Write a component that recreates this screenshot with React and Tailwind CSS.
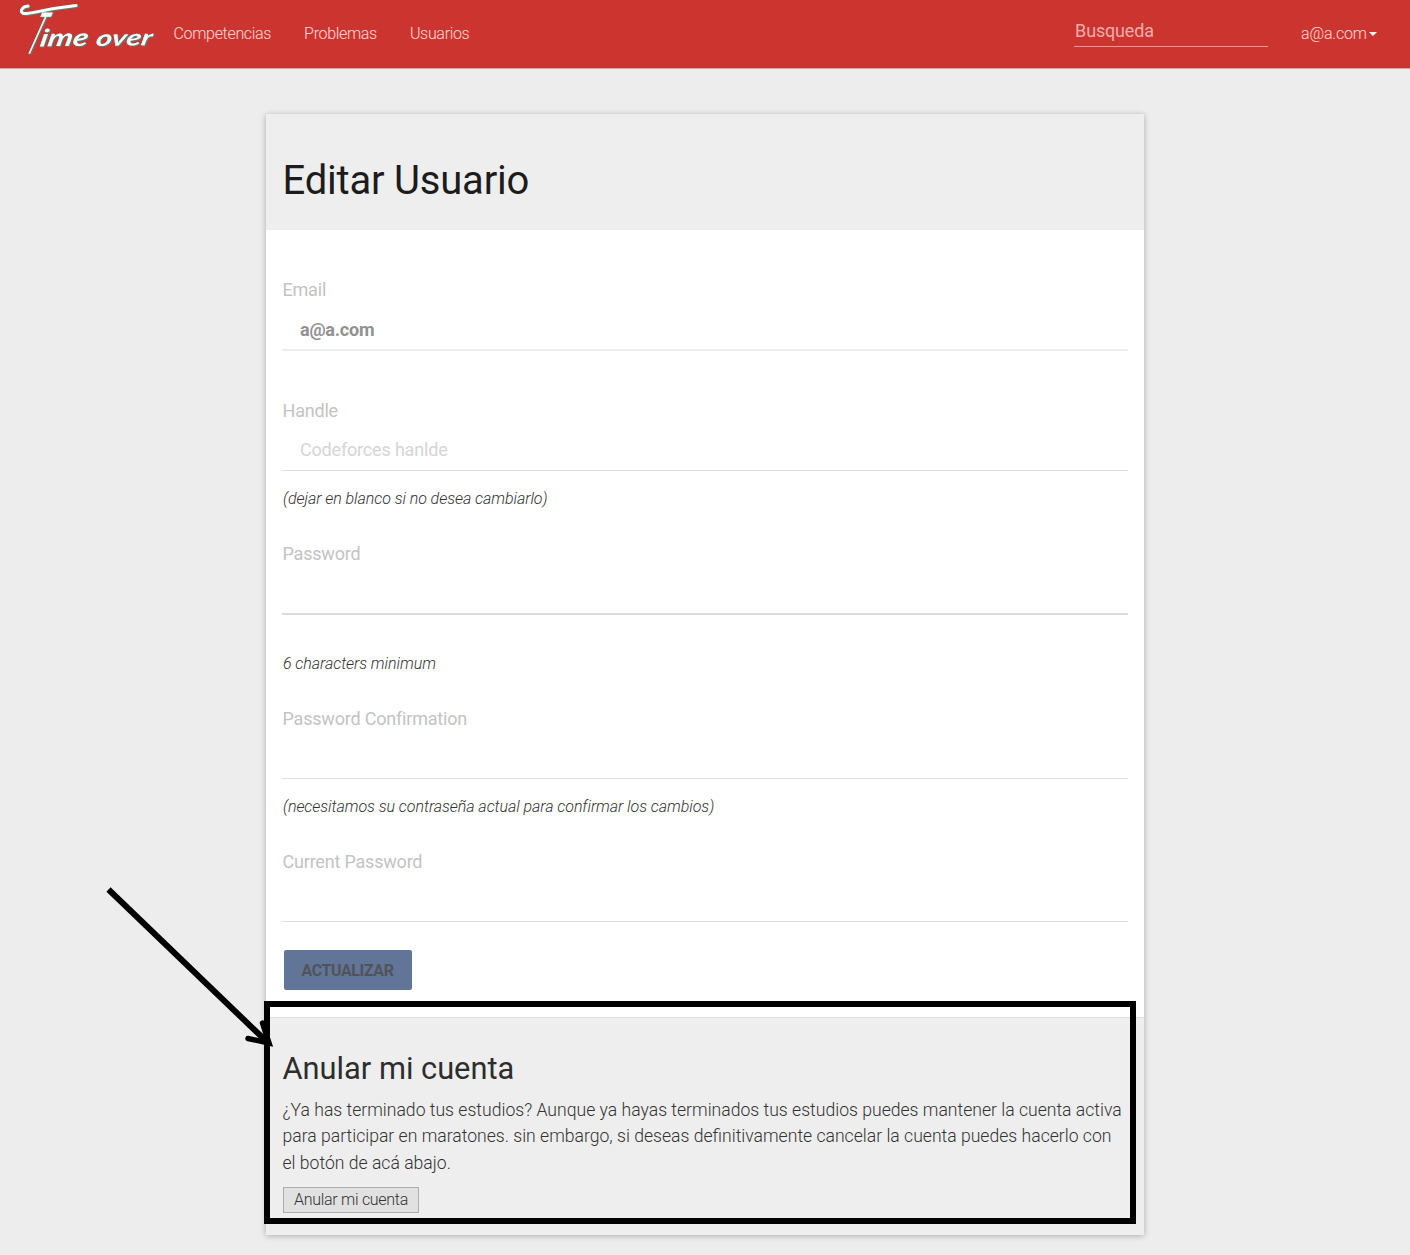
import React from "react";

function Logo() {
  return (
    <svg
      className="ml-4 h-[60px] w-[144px] shrink-0 overflow-visible"
      viewBox="0 0 144 60"
      aria-label="Time over"
    >
      <g className="[filter:drop-shadow(1px_1px_0_#3f8a7c)]">
        <path
          d="M12 6C6 6.500 3 12 7.500 13.500C14 14.500 24 9.500 60 5.500"
          fill="none"
          stroke="#fff"
          strokeWidth="3"
          strokeLinecap="round"
        />
        <text
          transform="translate(8 52.500) skewX(-24)"
          fill="#fff"
          stroke="#fff"
          strokeWidth="1.5"
          className="font-['Roboto'] text-[56px] font-light"
          textLength="11"
          lengthAdjust="spacingAndGlyphs"
        >
          T
        </text>
        <text
          transform="translate(23 46.500) rotate(-1) skewX(-12)"
          fill="#fff"
          className="font-['Lato'] text-[24px] font-bold italic"
          textLength="48"
          lengthAdjust="spacingAndGlyphs"
        >
          ime
        </text>
        <text
          transform="translate(79 46) rotate(-1) skewX(-12)"
          fill="#fff"
          className="font-['Lato'] text-[22px] font-bold italic"
          textLength="56"
          lengthAdjust="spacingAndGlyphs"
        >
          over
        </text>
      </g>
    </svg>
  );
}

function Label({ children, className }) {
  return (
    <label className={`block h-5 pl-[0.5px] text-[18px] leading-5 tracking-[-0.2px] text-[#c3c3c3] ${className}`}>
      {children}
    </label>
  );
}

function Hint({ children, className }) {
  return (
    <p className={`h-5 pl-px text-[16px] font-light leading-5 tracking-[-0.05px] italic text-[#333] ${className}`}>
      {children}
    </p>
  );
}

export default function App() {
  return (
    <div className="relative h-[1255px] w-[1410px] overflow-hidden bg-[#ededed] font-['Roboto',sans-serif] text-[#333]">
      <nav className="flex h-[68px] items-start bg-[#cc342f] text-[16px] font-light text-white/80 shadow-[0_1px_0_#e0a09c]">
        <Logo />
        <div className="ml-[13.500px] mt-6 flex gap-[33px] leading-5 tracking-[-0.32px]">
          <a>Competencias</a>
          <a>Problemas</a>
          <a>Usuarios</a>
        </div>
        <div className="ml-auto mt-[21px] h-[26px] w-[194px] border-b border-white/50 pl-px text-[18px] font-normal leading-5 tracking-[-0.16px] text-white/60">
          Busqueda
        </div>
        <div className="ml-[33px] mr-[32.800px] mt-6 flex items-center leading-5 tracking-[-0.2px]">
          a@a.com
          <span className="ml-[2.500px] h-0 w-0 border-x-[4.500px] border-t-[4.500px] border-x-transparent border-t-white" />
        </div>
      </nav>

      <main className="mx-auto mt-[46px] flex h-[1121px] w-[878px] flex-col bg-white shadow-[0_1px_6px_rgba(0,0,0,0.28)]">
        <header className="h-[116px] bg-[#eee] px-[16.500px] pt-[43px]">
          <h1 className="text-[40px] leading-12 tracking-[-0.2px] text-[#1c1c1c]">Editar Usuario</h1>
        </header>

        <form className="h-[787px] px-4">
          <Label className="mt-[50px]">Email</Label>
          <div className="mt-5 h-[31px] border-b-2 border-[#eee] pl-[18px] pt-[0.4px] text-[18px] font-bold leading-5 tracking-[-0.2px] text-[#919191]">
            a@a.com
          </div>
          <Label className="mt-[50px]">Handle</Label>
          <div className="mt-[19px] h-[31px] border-b border-[#e0e0e0] pl-[18px] text-[18px] leading-5 tracking-[-0.18px] text-[#d5d5d5]">
            Codeforces hanlde
          </div>
          <Hint className="mt-[18px]">(dejar en blanco si no desea cambiarlo)</Hint>
          <Label className="mt-[35px]">Password</Label>
          <div className="mt-[49px] h-[2px] bg-[#dadada]" />
          <Hint className="mt-[39px]">6 characters minimum</Hint>
          <Label className="mt-[35px]">Password Confirmation</Label>
          <div className="mt-[49px] h-px bg-[#e0e0e0]" />
          <Hint className="mt-[18px]">(necesitamos su contraseña actual para confirmar los cambios)</Hint>
          <Label className="mt-[35px]">Current Password</Label>
          <div className="mt-[49px] h-px bg-[#e0e0e0]" />
          <button className="ml-[1.500px] mt-7 block h-10 w-[128px] rounded-[2px] bg-[#617599] pt-px text-[16px] font-bold tracking-[-0.4px] text-[#515359]">
            ACTUALIZAR
          </button>
        </form>

        <section className="h-[218px] border-t border-[#dcdcdc] bg-[#eee] pl-4 pt-[31px]">
          <h2 className="h-10 pl-[0.5px] text-[30.800px] leading-10 text-[#2d2d2d]">Anular mi cuenta</h2>
          <p className="mt-2 whitespace-nowrap pl-[0.5px] text-[17.600px] font-light leading-[26.400px] text-[#333]">
            ¿Ya has terminado tus estudios? Aunque ya hayas terminados tus estudios puedes mantener la cuenta activa
            <br />
            para participar en maratones. sin embargo, si deseas definitivamente cancelar la cuenta puedes hacerlo con
            <br />
            el botón de acá abajo.
          </p>
          <button className="ml-px mt-[11px] block h-[26px] w-[136px] border border-[#adadad] bg-[#e1e1e1] text-[16px] font-light leading-6 tracking-[-0.28px] text-[#333]">
            Anular mi cuenta
          </button>
        </section>
      </main>

      <div className="absolute left-[264px] top-[1001px] h-[223px] w-[872px] border-[6px] border-black" />
      <svg className="absolute left-[100px] top-[880px] h-[175px] w-[180px]" viewBox="0 0 180 175">
        <path d="M8.500 9.500L166 161" stroke="#000" strokeWidth="6" />
        <path d="M148 158.500L169 163L162.500 143" fill="none" stroke="#000" strokeWidth="5.500" strokeLinecap="round" />
      </svg>
    </div>
  );
}
